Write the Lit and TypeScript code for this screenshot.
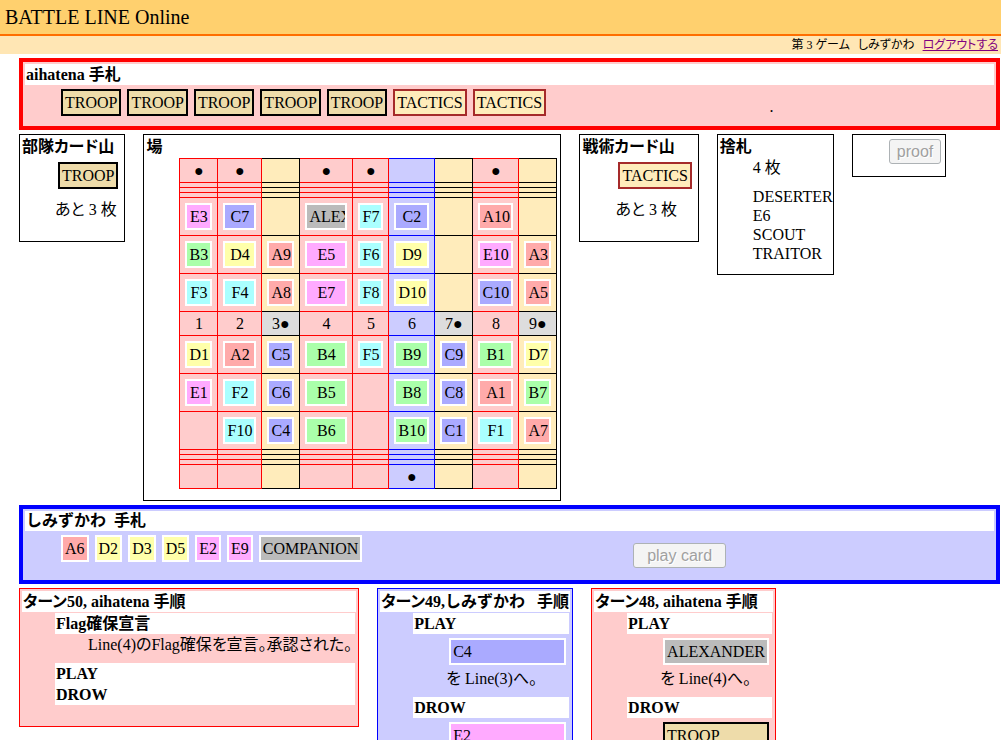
import { LitElement, html, css, nothing, TemplateResult } from "lit";
import { customElement, property } from "lit/decorators.js";
import { classMap } from "lit/directives/class-map.js";
import { styleMap } from "lit/directives/style-map.js";

type Side = "red" | "blue" | "none";

interface Line {
  side: Side;
  width: number;
  top: string[];
  bottom: string[];
  flagTop?: boolean;
  flagBottom?: boolean;
}

const LINES: Line[] = [
  { side: "red", width: 38, top: ["E3", "B3", "F3"], bottom: ["D1", "E1", ""], flagTop: true },
  { side: "red", width: 44, top: ["C7", "D4", "F4"], bottom: ["A2", "F2", "F10"], flagTop: true },
  { side: "none", width: 38, top: ["", "A9", "A8"], bottom: ["C5", "C6", "C4"] },
  { side: "red", width: 53, top: ["ALEXANDER", "E5", "E7"], bottom: ["B4", "B5", "B6"], flagTop: true },
  { side: "red", width: 36, top: ["F7", "F6", "F8"], bottom: ["F5", "", ""], flagTop: true },
  { side: "blue", width: 46, top: ["C2", "D9", "D10"], bottom: ["B9", "B8", "B10"], flagBottom: true },
  { side: "none", width: 38, top: ["", "", ""], bottom: ["C9", "C8", "C1"] },
  { side: "red", width: 46, top: ["A10", "E10", "C10"], bottom: ["B1", "A1", "F1"], flagTop: true },
  { side: "none", width: 38, top: ["", "A3", "A5"], bottom: ["D7", "B7", "A7"] },
];

@customElement("game-card")
export class GameCard extends LitElement {
  @property() name = "";

  static styles = css`
    :host {
      display: block;
      margin: 4px 3px 3px;
    }
    .card {
      box-sizing: border-box;
      height: 27px;
      padding: 0 2px;
      border: 2px solid #fff;
      background: #bbb;
      line-height: 23px;
      overflow: hidden;
      white-space: nowrap;
    }
    .a { background: #faa; }
    .b { background: #afa; }
    .c { background: #aaf; }
    .d { background: #ffa; }
    .e { background: #faf; }
    .f { background: #aff; }
    .troop { background: #eedcaa; border-color: #000; }
    .tactics { background: #ffecbb; border-color: #a52a2a; }
  `;

  render() {
    const kind = /^[A-F]\d+$/.test(this.name) ? this.name[0].toLowerCase() : this.name.toLowerCase();
    return html`<div class=${classMap({ card: true, [kind]: true })}>${this.name}</div>`;
  }
}

@customElement("app-root")
export class AppRoot extends LitElement {
  static styles = css`
    :host {
      display: block;
      color: #000;
      font: 16px/19px "Liberation Serif", "Noto Sans CJK JP", serif;
      font-feature-settings: "palt";
    }
    h1, h2, h3, p, ul { margin: 0; padding: 0; font-size: 16px; }
    ul { list-style: none; }
    .banner {
      padding: 0 5px;
      border-bottom: 2px solid #ff6e00;
      background: #ffd06e;
    }
    .banner h1 { font-size: 20px; font-weight: normal; line-height: 34px; }
    .status {
      display: flex;
      justify-content: flex-end;
      gap: 8px;
      padding: 0 3px;
      background: #ffe6b4;
      font-size: 12px;
      line-height: 18px;
    }
    .status a { color: #800080; }
    main {
      display: flex;
      flex-direction: column;
      gap: 4px;
      padding: 4px 1px 0 19px;
    }
    .red { --line: #f00; --fill: #fcc; }
    .blue { --line: #00f; --fill: #ccf; }
    .none { --line: #000; --fill: #ffecbb; }
    .hand {
      padding: 2px;
      border: 4px solid var(--line);
      background: var(--fill);
    }
    .heading {
      padding: 0 1px;
      background: #fff;
      line-height: 21px;
      white-space: nowrap;
    }
    .hand.blue .heading { line-height: 20px; }
    .kana { margin-right: 4px; font-feature-settings: normal; }
    .turn .kana { margin-right: 8px; }
    .hand-body { display: flex; padding-left: 33px; }
    .cards { display: flex; padding-bottom: 5px; }
    .action { flex: 1; padding: 12px 0 6px; text-align: center; }
    button {
      box-sizing: border-box;
      display: inline-block;
      height: 25px;
      margin: 0;
      padding: 0 7px;
      border: 1px solid #adb2b5;
      border-radius: 3px;
      background: #f4f4f4;
      color: #a0a0a0;
      font: 16px/23px "Liberation Sans", sans-serif;
      text-shadow: 1px 1px #fff;
      vertical-align: top;
    }
    .action button { padding: 0 13px; margin-bottom: 4px; }
    .row { display: flex; align-items: flex-start; gap: 18px; }
    .box { flex: none; padding: 1px 2px 2px; border: 1px solid #000; }
    .box > .heading { padding: 0 0 1px; }
    .box-body { padding: 0 1px 8px 33px; }
    .pile { padding-bottom: 20px; }
    .note { margin-top: 10px; }
    .pile .note { margin-top: 11px; }
    .discards { width: 77px; padding-bottom: 1px; }
    .proof { padding: 3px 2px 10px 34px; }
    .lines {
      width: 378px;
      table-layout: fixed;
      border-collapse: collapse;
      margin-bottom: 1px;
    }
    .lines td {
      box-sizing: border-box;
      height: 24px;
      padding: 0;
      border: 1px solid var(--line);
      background: var(--fill);
      text-align: center;
    }
    .lines .thin { height: 5px; }
    .lines .slot { height: 38px; padding: 1px 2px 2px; }
    .lines .open { background: #ddd; }
    .turn {
      flex: none;
      padding: 2px 2px 21px;
      border: 1px solid var(--line);
      background: var(--fill);
    }
    .steps { padding: 1px 1px 0 33px; }
    .step { padding: 0 0 8px 33px; }
    .step p { line-height: 21px; white-space: nowrap; }
    .step p:only-child { padding-right: 3px; }
  `;

  private hand(side: Side, owner: unknown, cards: string[], action: unknown) {
    return html`
      <section class="hand ${side}">
        <h2 class="heading">${owner} 手札</h2>
        <div class="hand-body">
          <div class="cards">${cards.map((c) => html`<game-card name=${c}></game-card>`)}</div>
          <div class="action">${action}</div>
        </div>
      </section>
    `;
  }

  private tableRow(cell: (line: Line, i: number) => unknown, kind = "") {
    return html`<tr>${LINES.map((l, i) => html`<td class="${l.side} ${kind}">${cell(l, i)}</td>`)}</tr>`;
  }

  private slot(name: string) {
    return name ? html`<game-card name=${name}></game-card>` : nothing;
  }

  private board() {
    const gap = [0, 1, 2].map(() => this.tableRow(() => nothing, "thin"));
    return html`
      <table class="lines">
        <colgroup>${LINES.map((l) => html`<col style=${styleMap({ width: `${l.width}px` })} />`)}</colgroup>
        <tbody>
          ${this.tableRow((l) => (l.flagTop ? "●" : nothing))}
          ${gap}
          ${[0, 1, 2].map((r) => this.tableRow((l) => this.slot(l.top[r]), "slot"))}
          <tr>
            ${LINES.map((l, i) => html`<td class="${l.side} ${l.side === "none" ? "open" : ""}">${i + 1}${l.side === "none" ? "●" : ""}</td>`)}
          </tr>
          ${[0, 1, 2].map((r) => this.tableRow((l) => this.slot(l.bottom[r]), "slot"))}
          ${gap}
          ${this.tableRow((l) => (l.flagBottom ? "●" : nothing))}
        </tbody>
      </table>
    `;
  }

  private pile(title: string, card: string) {
    return html`
      <section class="box">
        <h2 class="heading">${title}</h2>
        <div class="box-body pile">
          <game-card name=${card}></game-card>
          <p class="note">あと 3 枚</p>
        </div>
      </section>
    `;
  }

  private turn(side: Side, title: unknown, steps: [string, TemplateResult | null][]) {
    return html`
      <section class="turn ${side}">
        <h2 class="heading">${title}</h2>
        <div class="steps">
          ${steps.map(([name, body]) => html`
            <h3 class="heading">${name}</h3>
            ${body ? html`<div class="step">${body}</div>` : nothing}
          `)}
        </div>
      </section>
    `;
  }

  render() {
    const me = html`<span class="kana">しみずかわ</span>`;
    return html`
      <header>
        <div class="banner"><h1>BATTLE LINE Online</h1></div>
        <div class="status">
          <span>第 3 ゲーム</span><span>しみずかわ</span><a href="#logout">ログアウトする</a>
        </div>
      </header>
      <main>
        ${this.hand("red", "aihatena", ["TROOP", "TROOP", "TROOP", "TROOP", "TROOP", "TACTICS", "TACTICS"],
          html`<p>.</p>`)}
        <div class="row">
          ${this.pile("部隊カード山", "TROOP")}
          <section class="box">
            <h2 class="heading">場</h2>
            <div class="box-body">${this.board()}</div>
          </section>
          ${this.pile("戦術カード山", "TACTICS")}
          <section class="box">
            <h2 class="heading">捨札</h2>
            <div class="box-body">
              <p>4 枚</p>
              <ul class="note discards">
                <li>DESERTER</li>
                <li>E6</li>
                <li>SCOUT</li>
                <li>TRAITOR</li>
              </ul>
            </div>
          </section>
          <section class="box">
            <div class="proof"><button type="button" disabled>proof</button></div>
          </section>
        </div>
        ${this.hand("blue", me, ["A6", "D2", "D3", "D5", "E2", "E9", "COMPANION"],
          html`<button type="button" disabled>play card</button>`)}
        <div class="row">
          ${this.turn("red", "ターン50, aihatena 手順", [
            ["Flag確保宣言", html`<p>Line(4)のFlag確保を宣言。承認された。</p>`],
            ["PLAY", null],
            ["DROW", null],
          ])}
          ${this.turn("blue", html`ターン49,${me} 手順`, [
            ["PLAY", html`<game-card name="C4"></game-card><p>を Line(3)へ。</p>`],
            ["DROW", html`<game-card name="E2"></game-card>`],
          ])}
          ${this.turn("red", "ターン48, aihatena 手順", [
            ["PLAY", html`<game-card name="ALEXANDER"></game-card><p>を Line(4)へ。</p>`],
            ["DROW", html`<game-card name="TROOP"></game-card>`],
          ])}
        </div>
      </main>
    `;
  }
}
